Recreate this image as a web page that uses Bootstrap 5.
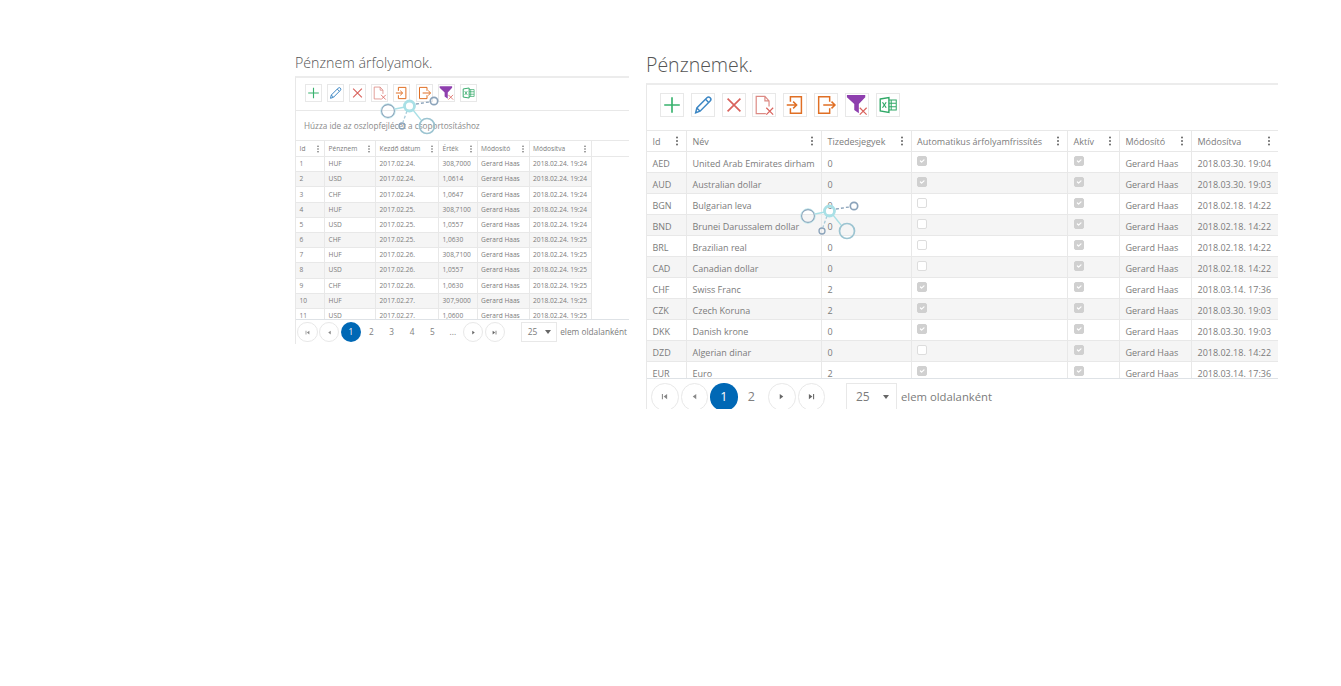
<!DOCTYPE html>
<html lang="hu">
<head>
<meta charset="utf-8">
<title>Pénznemek</title>
<link href="https://cdn.jsdelivr.net/npm/bootstrap@5.3.0/dist/css/bootstrap.min.css" rel="stylesheet">
<style>
html,body{height:686px;overflow:hidden;background:#fff}
body{font-family:"Open Sans","Liberation Sans",sans-serif;color:#7b7b7b}
.desk{padding-left:295px;gap:17px}
.win{position:relative;flex:none}
.win-s{width:334px;padding-top:53px}
.win-l{width:632px;padding-top:51px}
.win-title{font-weight:300;color:#555;margin:0}
.win-s .win-title{font-size:14.2px;line-height:20px;margin-bottom:3px}
.win-l .win-title{font-size:19.5px;line-height:28px;margin-bottom:4px}
.grid-box{border-left:1px solid #e8e8e8;border-top:2px solid #ececec;overflow:hidden}
.win-s .grid-box{height:268px}
.win-l .grid-box{height:326px}
.win-s .tools{height:32px;padding:6px 0 0 8.7px;gap:5.2px}
.win-l .tools{height:45px;padding:8px 0 0 13px;gap:6.8px}
.tool{display:block;border:1px solid #e8e8e8;background:#fff;flex:none}
.win-s .tool{width:17px;height:18px}
.win-l .tool{width:24px;height:24px}
.tool svg{width:100%;height:100%;display:block;overflow:visible}
.group-zone{height:30px;border-top:1px solid #e8e8e8;font-size:8.2px;line-height:29px;padding-left:8px;color:#8a8a8a}
.head-wrap{border-top:1px solid #e8e8e8;border-bottom:1px solid #e8e8e8}
.gridt{table-layout:fixed;border-collapse:separate;border-spacing:0;margin:0}
.gridt td,.gridt th{border-right:1px solid #e8e8e8;font-weight:400;white-space:nowrap;overflow:hidden;padding:0;color:#7b7b7b;position:relative;vertical-align:middle}
.win-s .gridt{width:295.5px;font-size:6.6px}
.win-s .gridt td,.win-s .gridt th{padding-left:3.6px}
.win-s .gridt td{height:15.2px;border-bottom:1px solid #e8e8e8}
.win-s .gridt th{height:15px}
.win-s .body-wrap{height:162px;overflow:hidden}
.win-l .gridt{width:655.5px;font-size:9px}
.win-l .gridt td,.win-l .gridt th{padding-left:5.5px}
.win-l .gridt td{height:21px;border-bottom:1px solid #e8e8e8;padding-top:4px}
.win-l .gridt th{height:20px;padding-top:2px}
.win-l .body-wrap{height:226px;overflow:hidden}
.gridt tr:nth-child(even) td{background:#f5f5f5}
.c-a1{width:29px}.c-a2{width:51px}.c-a3{width:63px}.c-a4{width:38.5px}.c-a5{width:52px}.c-a6{width:62px}
.c-b1{width:40px}.c-b2{width:135px}.c-b3{width:89.5px}.c-b4{width:156.5px}.c-b5{width:52px}.c-b6{width:72px}.c-b7{width:111px}
.dots{position:absolute;top:50%;width:2px;height:2px;margin-top:-1px;background:#666;border-radius:50%;box-shadow:0 -3.5px 0 #666,0 3.5px 0 #666}
.win-s .dots{right:5px;transform:scale(.8)}
.win-l .dots{right:8px}
.win-l .dots-far{right:32px}
.chk.form-check-input{display:block;margin:0;width:10px;height:10px;border-radius:2px;border-color:#ddd;background-color:#fff;opacity:1;position:relative;top:-3px}
.chk.form-check-input:checked{background-color:#d0d0d0;border-color:#d0d0d0}
.pager{align-items:flex-start}
.win-s .pager{padding:2px 0 0 1.3px;font-size:8.3px;line-height:20px}
.win-l .pager{padding:4px 0 0 4px;font-size:11.3px;line-height:28px;white-space:nowrap}
.pg{display:flex;align-items:center;justify-content:center;flex:none;border-radius:50%;color:#808080;border:1px solid transparent}
.win-s .pg{width:20.4px;height:20.4px}
.win-l .pg{width:27.5px;height:27.5px;font-size:12.5px}
.pg-edge{border-color:#e8e8e8}
.win-s .pg-edge{margin-right:1.3px}
.win-l .pg-edge{margin-right:2px}
.win-l .pg-gap{margin-left:3px}
.pg-on{background:#0068b5;color:#fff}
.win-s .pg svg{width:5px;height:5px}
.win-l .pg svg{width:7px;height:7px}
.size-box{display:flex;align-items:center;justify-content:space-between;flex:none;border:1px solid #e8e8e8}
.win-s .size-box{width:36px;height:20px;margin-left:14.3px;padding:0 5px 0 6px;font-size:8.4px}
.win-l .size-box{width:51px;height:30px;margin-left:19px;padding:0 7px 2px 9px;font-size:12px}
.caret-d{width:0;height:0;border-style:solid;border-color:#666 transparent transparent;border-width:4px 3px 0}
.per-page{white-space:nowrap}
.win-s .per-page{margin-left:3.5px}
.win-l .per-page{margin-left:4px}
.load{position:absolute;width:70px;height:46px;pointer-events:none}
.load-s{left:83px;top:94px}
.load-l{left:152px;top:199px}
.sprites{position:absolute}
</style>
</head>
<body>
<svg width="0" height="0" class="sprites" aria-hidden="true">
<defs>
<symbol id="i-add" viewBox="0 0 24 24"><path d="M12 3.500v17M3.500 12h17" stroke="#38b26e" stroke-width="1.800" fill="none"/></symbol>
<symbol id="i-edit" viewBox="0 0 24 24"><path d="M4 20.500l1.300-5.300L16.300 4.200a2.300 2.300 0 0 1 3.500 3.500L8.800 18.800zM5.300 15.200l3.500 3.600M14.800 5.800l3.400 3.400" stroke="#3d87c4" stroke-width="1.600" fill="none"/></symbol>
<symbol id="i-del" viewBox="0 0 24 24"><path d="M5 5l14 14M19 5L5 19" stroke="#d9625c" stroke-width="1.800" fill="none"/></symbol>
<symbol id="i-doc" viewBox="0 0 24 24"><path d="M14 21.500H3.500V2.500H13l4.500 5v6M13 2.500v5h4.500" stroke="#dc8a84" stroke-width="1.300" fill="none"/><path d="M14.500 15l7.500 7.500M22 15l-7.500 7.500" stroke="#d9625c" stroke-width="1.300" fill="none"/></symbol>
<symbol id="i-in" viewBox="0 0 24 24"><path d="M7 8.500V3h12v18H7v-5.500" stroke="#e06f24" stroke-width="1.600" fill="none"/><path d="M3 12h10.500M10 8.300l3.800 3.700-3.800 3.700" stroke="#e06f24" stroke-width="1.600" fill="none"/></symbol>
<symbol id="i-out" viewBox="0 0 24 24"><path d="M16 8.500V3H4v18h12v-5.500" stroke="#e06f24" stroke-width="1.600" fill="none"/><path d="M9 12h12.500M18 8.300l3.800 3.700-3.800 3.700" stroke="#e06f24" stroke-width="1.600" fill="none"/></symbol>
<symbol id="i-flt" viewBox="0 0 24 24"><path d="M1 1h20v2.500L14 11v10l-5-3.500V11L1 3.500z" fill="#8e3fae"/><path d="M15 15l7.500 7.500M22.500 15L15 22.500" stroke="#d9625c" stroke-width="1.300" fill="none"/></symbol>
<symbol id="i-xls" viewBox="0 0 24 24"><path d="M12 6.500h9v11h-9M15.500 6.500v11M12 10h9M12 14h9" stroke="#2fa866" stroke-width="1.100" fill="none"/><path d="M3.500 5.500L13 4v16l-9.500-1.500z" fill="#fff" stroke="#2fa866" stroke-width="1.500"/><path d="M6 9l4 6M10 9l-4 6" stroke="#2fa866" stroke-width="1.300" fill="none"/></symbol>
<symbol id="p-first" viewBox="0 0 8 8"><path d="M1 1h1.200v6H1zM7 1v6L3 4z" fill="#888"/></symbol>
<symbol id="p-prev" viewBox="0 0 8 8"><path d="M6 1v6L2 4z" fill="#888"/></symbol>
<symbol id="p-next" viewBox="0 0 8 8"><path d="M2 1v6l4-3z" fill="#666"/></symbol>
<symbol id="p-last" viewBox="0 0 8 8"><path d="M7 1H5.800v6H7zM1 1v6l4-3z" fill="#666"/></symbol>
<symbol id="spin" viewBox="0 0 70 46">
<g fill="none" stroke-width="1.300">
<path d="M17 15l10-2" stroke="#a9e0e6"/>
<path d="M38 10l13-2" stroke="#8ba3ba" stroke-dasharray="3 2"/>
<path d="M29 17l-4 11" stroke="#a8cbd9" stroke-dasharray="3 2"/>
<path d="M35 16l8 10" stroke="#a9e0e6"/>
<circle cx="10" cy="17" r="6.500" stroke="#8ba3ba"/>
<circle cx="10" cy="17" r="7.300" stroke="#b5e5ea" stroke-width=".7"/>
<circle cx="31.500" cy="12" r="5" stroke="#a9e0e6" stroke-width="2.800"/>
<circle cx="56" cy="7" r="3.700" stroke="#8ba3ba" stroke-width="1.700"/>
<circle cx="24" cy="32" r="3" stroke="#8ba3ba"/>
<circle cx="49" cy="32" r="7.500" stroke="#9cc4d1" stroke-width="1.700"/>
</g>
</symbol>
</defs>
</svg>

<div class="desk d-flex align-items-start">

<section class="win win-s">
<h1 class="win-title">Pénznem árfolyamok.</h1>
<div class="grid-box">
<div class="tools d-flex">
<a class="tool"><svg><use href="#i-add"/></svg></a>
<a class="tool"><svg><use href="#i-edit"/></svg></a>
<a class="tool"><svg><use href="#i-del"/></svg></a>
<a class="tool"><svg><use href="#i-doc"/></svg></a>
<a class="tool"><svg><use href="#i-in"/></svg></a>
<a class="tool"><svg><use href="#i-out"/></svg></a>
<a class="tool"><svg><use href="#i-flt"/></svg></a>
<a class="tool"><svg><use href="#i-xls"/></svg></a>
</div>
<div class="group-zone">Húzza ide az oszlopfejlécet a csoportosításhoz</div>
<div class="head-wrap">
<table class="gridt">
<colgroup><col class="c-a1"><col class="c-a2"><col class="c-a3"><col class="c-a4"><col class="c-a5"><col class="c-a6"></colgroup>
<thead><tr><th>Id<span class="dots"></span></th><th>Pénznem<span class="dots"></span></th><th>Kezdő dátum<span class="dots"></span></th><th>Érték<span class="dots"></span></th><th>Módosító<span class="dots"></span></th><th>Módosítva<span class="dots"></span></th></tr></thead>
</table>
</div>
<div class="body-wrap">
<table class="gridt">
<colgroup><col class="c-a1"><col class="c-a2"><col class="c-a3"><col class="c-a4"><col class="c-a5"><col class="c-a6"></colgroup>
<tbody>
<tr><td>1</td><td>HUF</td><td>2017.02.24.</td><td>308,7000</td><td>Gerard Haas</td><td>2018.02.24. 19:24</td></tr>
<tr><td>2</td><td>USD</td><td>2017.02.24.</td><td>1,0614</td><td>Gerard Haas</td><td>2018.02.24. 19:24</td></tr>
<tr><td>3</td><td>CHF</td><td>2017.02.24.</td><td>1,0647</td><td>Gerard Haas</td><td>2018.02.24. 19:24</td></tr>
<tr><td>4</td><td>HUF</td><td>2017.02.25.</td><td>308,7100</td><td>Gerard Haas</td><td>2018.02.24. 19:24</td></tr>
<tr><td>5</td><td>USD</td><td>2017.02.25.</td><td>1,0557</td><td>Gerard Haas</td><td>2018.02.24. 19:24</td></tr>
<tr><td>6</td><td>CHF</td><td>2017.02.25.</td><td>1,0630</td><td>Gerard Haas</td><td>2018.02.24. 19:25</td></tr>
<tr><td>7</td><td>HUF</td><td>2017.02.26.</td><td>308,7100</td><td>Gerard Haas</td><td>2018.02.24. 19:25</td></tr>
<tr><td>8</td><td>USD</td><td>2017.02.26.</td><td>1,0557</td><td>Gerard Haas</td><td>2018.02.24. 19:25</td></tr>
<tr><td>9</td><td>CHF</td><td>2017.02.26.</td><td>1,0630</td><td>Gerard Haas</td><td>2018.02.24. 19:25</td></tr>
<tr><td>10</td><td>HUF</td><td>2017.02.27.</td><td>307,9000</td><td>Gerard Haas</td><td>2018.02.24. 19:25</td></tr>
<tr><td>11</td><td>USD</td><td>2017.02.27.</td><td>1,0600</td><td>Gerard Haas</td><td>2018.02.24. 19:25</td></tr>
</tbody>
</table>
</div>
<div class="pager d-flex border-top">
<span class="pg pg-edge"><svg><use href="#p-first"/></svg></span>
<span class="pg pg-edge"><svg><use href="#p-prev"/></svg></span>
<span class="pg pg-on">1</span>
<span class="pg">2</span>
<span class="pg">3</span>
<span class="pg">4</span>
<span class="pg">5</span>
<span class="pg">...</span>
<span class="pg pg-edge"><svg><use href="#p-next"/></svg></span>
<span class="pg pg-edge"><svg><use href="#p-last"/></svg></span>
<span class="size-box">25<i class="caret-d"></i></span>
<span class="per-page">elem oldalanként</span>
</div>
</div>
<svg class="load load-s"><use href="#spin"/></svg>
</section>

<section class="win win-l">
<h1 class="win-title">Pénznemek.</h1>
<div class="grid-box">
<div class="tools d-flex">
<a class="tool"><svg><use href="#i-add"/></svg></a>
<a class="tool"><svg><use href="#i-edit"/></svg></a>
<a class="tool"><svg><use href="#i-del"/></svg></a>
<a class="tool"><svg><use href="#i-doc"/></svg></a>
<a class="tool"><svg><use href="#i-in"/></svg></a>
<a class="tool"><svg><use href="#i-out"/></svg></a>
<a class="tool"><svg><use href="#i-flt"/></svg></a>
<a class="tool"><svg><use href="#i-xls"/></svg></a>
</div>
<div class="head-wrap">
<table class="gridt">
<colgroup><col class="c-b1"><col class="c-b2"><col class="c-b3"><col class="c-b4"><col class="c-b5"><col class="c-b6"><col class="c-b7"></colgroup>
<thead><tr><th>Id<span class="dots"></span></th><th>Név<span class="dots"></span></th><th>Tizedesjegyek<span class="dots"></span></th><th>Automatikus árfolyamfrissítés<span class="dots"></span></th><th>Aktív<span class="dots"></span></th><th>Módosító<span class="dots"></span></th><th>Módosítva<span class="dots dots-far"></span></th></tr></thead>
</table>
</div>
<div class="body-wrap">
<table class="gridt">
<colgroup><col class="c-b1"><col class="c-b2"><col class="c-b3"><col class="c-b4"><col class="c-b5"><col class="c-b6"><col class="c-b7"></colgroup>
<tbody>
<tr><td>AED</td><td>United Arab Emirates dirham</td><td>0</td><td><input class="chk form-check-input" type="checkbox" checked disabled></td><td><input class="chk form-check-input" type="checkbox" checked disabled></td><td>Gerard Haas</td><td>2018.03.30. 19:04</td></tr>
<tr><td>AUD</td><td>Australian dollar</td><td>0</td><td><input class="chk form-check-input" type="checkbox" checked disabled></td><td><input class="chk form-check-input" type="checkbox" checked disabled></td><td>Gerard Haas</td><td>2018.03.30. 19:03</td></tr>
<tr><td>BGN</td><td>Bulgarian leva</td><td>0</td><td><input class="chk form-check-input" type="checkbox" disabled></td><td><input class="chk form-check-input" type="checkbox" checked disabled></td><td>Gerard Haas</td><td>2018.02.18. 14:22</td></tr>
<tr><td>BND</td><td>Brunei Darussalem dollar</td><td>0</td><td><input class="chk form-check-input" type="checkbox" disabled></td><td><input class="chk form-check-input" type="checkbox" checked disabled></td><td>Gerard Haas</td><td>2018.02.18. 14:22</td></tr>
<tr><td>BRL</td><td>Brazilian real</td><td>0</td><td><input class="chk form-check-input" type="checkbox" disabled></td><td><input class="chk form-check-input" type="checkbox" checked disabled></td><td>Gerard Haas</td><td>2018.02.18. 14:22</td></tr>
<tr><td>CAD</td><td>Canadian dollar</td><td>0</td><td><input class="chk form-check-input" type="checkbox" disabled></td><td><input class="chk form-check-input" type="checkbox" checked disabled></td><td>Gerard Haas</td><td>2018.02.18. 14:22</td></tr>
<tr><td>CHF</td><td>Swiss Franc</td><td>2</td><td><input class="chk form-check-input" type="checkbox" checked disabled></td><td><input class="chk form-check-input" type="checkbox" checked disabled></td><td>Gerard Haas</td><td>2018.03.14. 17:36</td></tr>
<tr><td>CZK</td><td>Czech Koruna</td><td>2</td><td><input class="chk form-check-input" type="checkbox" checked disabled></td><td><input class="chk form-check-input" type="checkbox" checked disabled></td><td>Gerard Haas</td><td>2018.03.30. 19:03</td></tr>
<tr><td>DKK</td><td>Danish krone</td><td>0</td><td><input class="chk form-check-input" type="checkbox" checked disabled></td><td><input class="chk form-check-input" type="checkbox" checked disabled></td><td>Gerard Haas</td><td>2018.03.30. 19:03</td></tr>
<tr><td>DZD</td><td>Algerian dinar</td><td>0</td><td><input class="chk form-check-input" type="checkbox" disabled></td><td><input class="chk form-check-input" type="checkbox" checked disabled></td><td>Gerard Haas</td><td>2018.02.18. 14:22</td></tr>
<tr><td>EUR</td><td>Euro</td><td>2</td><td><input class="chk form-check-input" type="checkbox" checked disabled></td><td><input class="chk form-check-input" type="checkbox" checked disabled></td><td>Gerard Haas</td><td>2018.03.14. 17:36</td></tr>
</tbody>
</table>
</div>
<div class="pager d-flex border-top">
<span class="pg pg-edge"><svg><use href="#p-first"/></svg></span>
<span class="pg pg-edge"><svg><use href="#p-prev"/></svg></span>
<span class="pg pg-on">1</span>
<span class="pg">2</span>
<span class="pg pg-edge pg-gap"><svg><use href="#p-next"/></svg></span>
<span class="pg pg-edge"><svg><use href="#p-last"/></svg></span>
<span class="size-box">25<i class="caret-d"></i></span>
<span class="per-page">elem oldalanként</span>
</div>
</div>
<svg class="load load-l"><use href="#spin"/></svg>
</section>

</div>
</body>
</html>
